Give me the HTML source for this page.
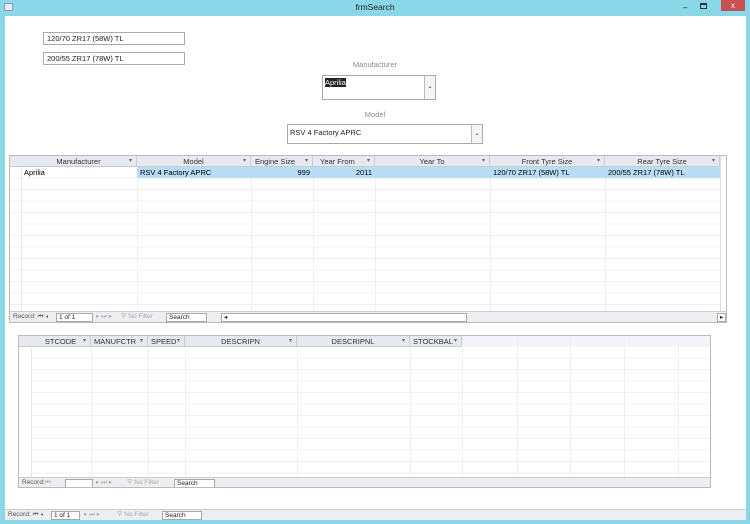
<!DOCTYPE html>
<html><head><style>
*{margin:0;padding:0;box-sizing:border-box}
body{width:750px;height:524px;background:#8ad7e8;font-family:"Liberation Sans",sans-serif;font-size:7.5px;color:#222;position:relative;overflow:hidden}
.a{position:absolute}
.win{left:5px;top:16px;width:741px;height:504px;background:#fff}
.tb{border:1px solid #aaa;background:#fff;padding:1px 3px;font-size:7.5px}
.lbl{color:#888;font-size:7.5px;text-align:center}
.grid{border:1px solid #bbb;background:#fff;overflow:hidden}
.hdr{background:#e6e9ef;height:11px;border-bottom:1px solid #ccc}
.h{position:absolute;top:0;height:11px;line-height:11px;text-align:center;color:#333;border-right:1px solid #c8ccd4;font-size:7.5px}
.h::after{content:"▾";position:absolute;right:4px;font-size:6px;color:#666}
.rows{background-image:repeating-linear-gradient(to bottom,transparent 0,transparent 10.5px,#f0f0f0 10.5px,#f0f0f0 11.5px)}
.vl{position:absolute;width:1px;background:#f0f0f0}
.nav{background:#eceef1;border-top:1px solid #ccc;height:11px;font-size:6.5px;color:#555;line-height:10px}
.nav span{position:absolute;top:0}
.bx{border:1px solid #aaa;background:#fff;height:9px;top:1px!important;line-height:7px;padding-left:2px;color:#222}
</style></head><body>
<div class="a" style="left:4px;top:3px;width:9px;height:8px;background:#e8e8ff;border:1px solid #99a"></div>
<div class="a" style="left:0;top:2px;width:750px;text-align:center;font-size:8.5px;color:#222">frmSearch</div>
<div class="a" style="left:683px;top:3px;font-size:8px;color:#222">–</div>
<div class="a" style="left:700px;top:3px;width:7px;height:6px;border:1px solid #333;border-top-width:2px"></div>
<div class="a" style="left:721px;top:0;width:24px;height:11px;background:#c75050;color:#fff;text-align:center;font-size:8px;line-height:11px">x</div>
<div class="a win"></div>

<div class="a tb" style="left:43px;top:32px;width:142px;height:13px">120/70 ZR17 (58W) TL</div>
<div class="a tb" style="left:43px;top:52px;width:142px;height:13px">200/55 ZR17 (78W) TL</div>
<div class="a lbl" style="left:322px;top:60px;width:106px">Manufacturer</div>
<div class="a tb" style="left:322px;top:75px;width:114px;height:25px;padding:2px"><span style="background:#222;color:#fff">Aprilia</span></div>
<div class="a" style="left:424px;top:76px;width:11px;height:23px;border-left:1px solid #bbb;background:#f4f4f4;font-size:6px;text-align:center;line-height:23px">⌄</div>
<div class="a lbl" style="left:322px;top:110px;width:106px">Model</div>
<div class="a tb" style="left:287px;top:124px;width:196px;height:20px;padding:3px 2px">RSV 4 Factory APRC</div>
<div class="a" style="left:471px;top:125px;width:11px;height:18px;border-left:1px solid #bbb;background:#f4f4f4;font-size:6px;text-align:center;line-height:18px">⌄</div>

<div class="a grid" style="left:9px;top:155px;width:718px;height:168px">
 <div class="a hdr" style="left:0;top:0;width:710px"></div>
 <div class="h" style="left:11px;width:116px">Manufacturer</div>
 <div class="h" style="left:127px;width:114px">Model</div>
 <div class="h" style="left:241px;width:62px;text-align:left;padding-left:4px">Engine Size</div>
 <div class="h" style="left:303px;width:62px;text-align:left;padding-left:7px">Year From</div>
 <div class="h" style="left:365px;width:115px">Year To</div>
 <div class="h" style="left:480px;width:115px">Front Tyre Size</div>
 <div class="h" style="left:595px;width:115px">Rear Tyre Size</div>
 <div class="a rows" style="left:0;top:11px;width:710px;height:144px"></div>
 <div class="vl" style="left:11px;top:11px;height:144px;background:#e4e4e4"></div>
 <div class="vl" style="left:127px;top:11px;height:144px"></div>
 <div class="vl" style="left:241px;top:11px;height:144px"></div>
 <div class="vl" style="left:303px;top:11px;height:144px"></div>
 <div class="vl" style="left:365px;top:11px;height:144px"></div>
 <div class="vl" style="left:480px;top:11px;height:144px"></div>
 <div class="vl" style="left:595px;top:11px;height:144px"></div>
 <div class="vl" style="left:710px;top:0;height:156px;background:#ddd"></div>
 <div class="a" style="left:127px;top:11px;width:583px;height:11px;background:#b9dcf7"></div>
 <div class="a" style="left:14px;top:12px;color:#000">Aprilia</div>
 <div class="a" style="left:130px;top:12px;color:#000">RSV 4 Factory APRC</div>
 <div class="a" style="left:241px;top:12px;width:59px;text-align:right;color:#000">999</div>
 <div class="a" style="left:303px;top:12px;width:59px;text-align:right;color:#000">2011</div>
 <div class="a" style="left:483px;top:12px;color:#000">120/70 ZR17 (58W) TL</div>
 <div class="a" style="left:598px;top:12px;color:#000">200/55 ZR17 (78W) TL</div>
 <div class="a nav" style="left:0;top:155px;width:718px">
  <span style="left:3px">Record: ⏮ ◂</span><span class="bx" style="left:46px;width:37px">1 of 1</span>
  <span style="left:86px;color:#aaa">▸ ⏭ ▸</span><span style="left:111px;color:#aaa">⛛ No Filter</span>
  <span class="bx" style="left:156px;width:41px">Search</span>
  <span class="bx" style="left:211px;width:246px">◂</span>
  <span class="bx" style="left:707px;width:9px">▸</span>
 </div>
</div>

<div class="a grid" style="left:18px;top:335px;width:693px;height:153px">
 <div class="a" style="left:0;top:0;width:693px;height:11px;background:#f2f4fa"></div>
 <div class="a hdr" style="left:0;top:0;width:443px"></div>
 <div class="h" style="left:12px;width:60px">STCODE</div>
 <div class="h" style="left:72px;width:57px;text-align:left;padding-left:3px">MANUFCTR</div>
 <div class="h" style="left:129px;width:37px;text-align:left;padding-left:3px">SPEED</div>
 <div class="h" style="left:166px;width:112px">DESCRIPN</div>
 <div class="h" style="left:278px;width:113px">DESCRIPNL</div>
 <div class="h" style="left:391px;width:52px;text-align:left;padding-left:3px">STOCKBAL</div>
 <div class="a rows" style="left:12px;top:11px;width:680px;height:130px"></div>
 <div class="vl" style="left:12px;top:11px;height:130px;background:#e4e4e4"></div>
 <div class="vl" style="left:72px;top:11px;height:130px"></div>
 <div class="vl" style="left:129px;top:11px;height:130px"></div>
 <div class="vl" style="left:166px;top:11px;height:130px"></div>
 <div class="vl" style="left:278px;top:11px;height:130px"></div>
 <div class="vl" style="left:391px;top:11px;height:130px"></div>
 <div class="vl" style="left:443px;top:0;height:141px"></div>
 <div class="vl" style="left:498px;top:0;height:141px"></div>
 <div class="vl" style="left:551px;top:0;height:141px"></div>
 <div class="vl" style="left:605px;top:0;height:141px"></div>
 <div class="vl" style="left:659px;top:0;height:141px"></div>
 <div class="a nav" style="left:0;top:141px;width:693px">
  <span style="left:3px">Record: <span style="color:#aaa">⏮ ◂</span></span><span class="bx" style="left:46px;width:28px"></span>
  <span style="left:77px;color:#aaa">▸ ⏭ ▸</span><span style="left:108px;color:#aaa">⛛ No Filter</span>
  <span class="bx" style="left:155px;width:41px">Search</span>
 </div>
</div>

<div class="a nav" style="left:5px;top:509px;width:741px;height:11px">
 <span style="left:3px">Record: ⏮ ◂</span><span class="bx" style="left:46px;width:29px">1 of 1</span>
 <span style="left:79px;color:#aaa">▸ ⏭ ▸</span><span style="left:112px;color:#aaa">⛛ No Filter</span>
 <span class="bx" style="left:157px;width:40px">Search</span>
</div>
</body></html>
